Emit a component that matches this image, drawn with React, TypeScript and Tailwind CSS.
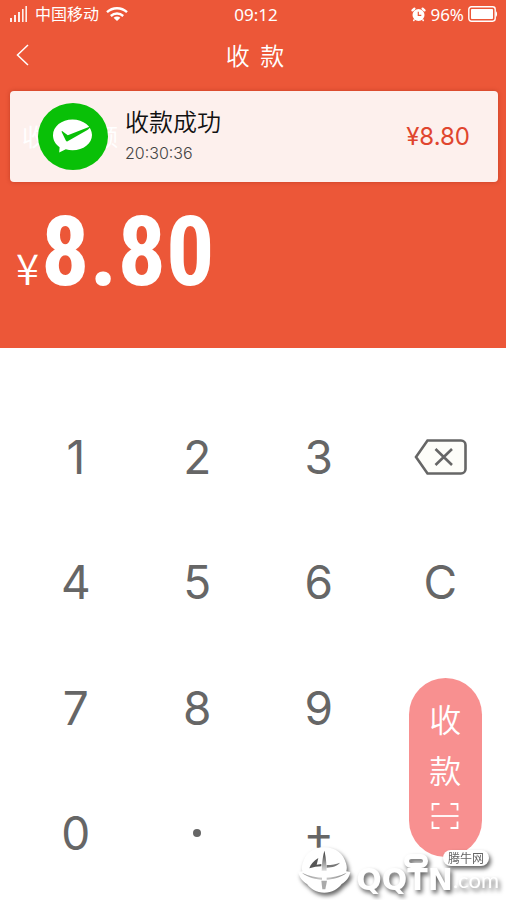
import type { ReactNode } from 'react'

function SignalIcon() {
  return (
    <svg className="h-4 w-[18px]" viewBox="0 0 18 16" fill="#fff" fillOpacity="0.9">
      <rect x="0" y="12" width="2" height="4" />
      <rect x="4" y="9" width="2" height="7" />
      <rect x="8" y="6" width="2" height="10" />
      <rect x="12" y="3" width="1.6" height="13" />
      <rect x="15.4" y="0" width="1.6" height="16" />
    </svg>
  )
}

function WifiIcon() {
  return (
    <svg className="h-[14px] w-[22px]" viewBox="0 0 22 14" fill="none" stroke="#fff" strokeWidth="2.4">
      <path d="M1 5.2C6.6 0 15.4 0 21 5.2" />
      <path d="M4.8 9c3.6-3.3 8.8-3.3 12.4 0" />
      <path d="M11 14l-3.4-3.2c2-1.7 4.8-1.7 6.8 0z" fill="#fff" stroke="none" />
    </svg>
  )
}

function AlarmIcon() {
  return (
    <svg className="h-[15px] w-[15px]" viewBox="0 0 15 15">
      <circle cx="7.5" cy="8" r="6" fill="#fff" />
      <path d="M1.5 3.4L3.4 1.6M13.5 3.4L11.6 1.6" stroke="#fff" strokeWidth="2.2" strokeLinecap="round" />
      <path d="M3.4 12.5l-1 1.5M11.6 12.5l1 1.5" stroke="#fff" strokeWidth="1.4" />
      <path d="M7.3 4.8v3.6h3" fill="none" stroke="#ec5738" strokeWidth="1.2" />
    </svg>
  )
}

function BatteryIcon() {
  return (
    <svg className="h-4 w-[30px]" viewBox="0 0 30 16">
      <rect x="0.8" y="0.8" width="26.4" height="14.4" rx="2.6" fill="none" stroke="#fff" strokeWidth="1.4" />
      <rect x="3" y="3" width="22" height="10" rx="0.8" fill="#fff" />
      <path d="M28 5.2c1.4.6 1.4 5 0 5.6z" fill="#fff" />
    </svg>
  )
}

function PayIcon() {
  return (
    <svg className="relative h-[67px] w-[70px] shrink-0" viewBox="0 0 70 67">
      <ellipse cx="35" cy="33.5" rx="35" ry="33.5" fill="#09c007" />
      <path
        d="M34.5 16.5c-11 0-19.5 7-19.5 15.8 0 4.9 2.5 9.1 6.6 12L21.2 49.5l6.6-3.2c2.1.6 4.4.9 6.7.9 11 0 19.5-6.7 19.5-15.2S45.5 16.5 34.5 16.5z"
        fill="#fff"
      />
      <path
        d="M24.4 28.2l5.4 4.1L54 22.8l-4.2 4-20.2 11.4c-.9.5-1.5.2-1.8-.6l-4-8.3c-.3-.9.1-1.5.6-1.1z"
        fill="#09c007"
      />
    </svg>
  )
}

function BackspaceIcon() {
  return (
    <svg className="h-9 w-[53px]" viewBox="0 0 53 36" stroke="#666" fill="none">
      <path d="M13.5 1.5H47a4.5 4.5 0 0 1 4.5 4.5v24a4.5 4.5 0 0 1-4.5 4.5H13.5L2 18z" fill="#fdfdf9" strokeWidth="2.6" />
      <path d="M21.5 10l16.5 16M38 10L21.5 26" strokeWidth="2.6" />
    </svg>
  )
}

function ScanIcon() {
  return (
    <svg className="mt-2 h-[26px] w-7" viewBox="0 0 28 26" fill="none" stroke="#fff" strokeWidth="1.8">
      <path d="M1.5 7.5V1h7M19.5 1h7v6.5M1.5 18.5V25h7M19.5 25h7v-6.5" />
      <path d="M.5 13h27" />
    </svg>
  )
}

function BullLogo() {
  return (
    <svg className="mr-[3px] h-12 w-[55px]" viewBox="0 0 165 144">
      <defs>
        <linearGradient id="slit" x1="0" y1="0" x2="0" y2="1">
          <stop offset="0" stopColor="#333" />
          <stop offset="1" stopColor="#ddd" />
        </linearGradient>
        <linearGradient id="lip" x1="0" y1="0" x2="1" y2="0">
          <stop offset="0" stopColor="#999" />
          <stop offset="0.5" stopColor="#ccc" />
          <stop offset="1" stopColor="#888" />
        </linearGradient>
      </defs>
      <path
        d="M79 4c34 0 58 20 65 48 3 10 3 16 1 24l12 2c-4 18-12 28-26 36-12 16-28 26-52 26s-40-10-52-26C13 106 5 96 1 78l12-2c-2-8-2-14 1-24C21 24 45 4 79 4z"
        fill="#fff"
      />
      <path d="M79 14c4 16 6 30 7 60H71c1-30 4-44 8-60z" fill="url(#slit)" />
      <path d="M61 36c-14 9-23 18-27 31 14-4 22-6 36-6v-7l-14 2c2-7 3-12 5-20z" fill="#555" />
      <path d="M126 50c-12 5-24 7-40 7v8c18-1 31-4 40-15z" fill="#777" />
      <path d="M12 80c40 20 94 20 134 0-32 28-102 28-134 0z" fill="url(#lip)" />
      <path d="M72 76h14v28H72z" fill="#fff" />
      <path d="M70 104h17l-5 26h-9z" fill="#aaa" />
    </svg>
  )
}

function Watermark() {
  return (
    <div className="pointer-events-none absolute right-[7px] bottom-[6px] flex items-end text-white drop-shadow-[2px_3px_2px_rgba(0,0,0,0.6)]">
      <BullLogo />
      <span className="font-['DejaVu_Sans',sans-serif] text-[30px] leading-7 font-bold">QQTN</span>
      <span className="font-['Lato',sans-serif] text-[22px] leading-7">.com</span>
      <span className="absolute top-2 left-[106px] h-[14px] w-6 rounded-full border-[5px] border-white" />
      <span className="absolute right-[10px] bottom-[28px] rounded-full bg-white px-[5px] font-['Noto_Sans_CJK_SC',sans-serif] text-[12px] leading-4 text-[#666]">
        腾牛网
      </span>
    </div>
  )
}

function Key({ label, children }: { label: string; children?: ReactNode }) {
  return (
    <button
      type="button"
      aria-label={label}
      className="flex items-center justify-center font-['Inter',sans-serif] text-[46px] leading-none text-[#666]"
    >
      {children ?? label}
    </button>
  )
}

export default function App() {
  return (
    <div className="relative flex min-h-screen flex-col bg-white font-['Noto_Sans','Noto_Sans_CJK_SC',sans-serif]">
      <header className="h-[348px] bg-[#ec5738] text-white">
        <div className="grid h-7 grid-cols-3 items-center pr-2 pl-[10px] text-[17px] leading-none">
          <div className="flex items-center gap-[7px]">
            <SignalIcon />
            <span className="text-[16px]">中国移动</span>
            <WifiIcon />
          </div>
          <span className="pl-1 text-center">09:12</span>
          <div className="flex items-center justify-end gap-1">
            <AlarmIcon />
            <span>96%</span>
            <BatteryIcon />
          </div>
        </div>

        <div className="grid h-[54px] grid-cols-3 items-center pr-3 pl-4">
          <button type="button" aria-label="返回" className="w-fit">
            <svg className="h-[22px] w-[13px]" viewBox="0 0 13 22" fill="none" stroke="#fff" strokeWidth="1.5">
              <path d="M12 1L1.5 11 12 21" />
            </svg>
          </button>
          <h1 className="text-center font-['Noto_Sans_CJK_SC',sans-serif] text-[24px] leading-none font-[350]">收&nbsp;&nbsp;款</h1>
        </div>

        <section className="relative mx-2 mt-[9px] ml-[10px] flex h-[91px] items-center rounded-[4px] bg-[#fdf0ed] pr-7 pl-7 shadow-[0_0_4px_rgba(140,30,10,0.4)]">
          <span className="absolute left-3 text-[24px] leading-none">收款金额</span>
          <PayIcon />
          <div className="ml-[17px] flex-1">
            <p className="font-['Noto_Sans_CJK_SC',sans-serif] text-[24px] leading-8 font-[350] text-[#111]">收款成功</p>
            <p className="font-['Inter',sans-serif] text-[16px] leading-8 font-light text-[#444]">20:30:36</p>
          </div>
          <span className="font-['Inter',sans-serif] text-[24px] text-[#e0452e]">¥8.80</span>
        </section>

        <p className="mt-[22px] flex items-end pl-4">
          <span className="pb-3 font-['Noto_Sans_CJK_SC',sans-serif] text-[42px] leading-none font-[350]">¥</span>
          <span className="ml-[2px] font-['Roboto_Condensed','Liberation_Sans',sans-serif] text-[96px] leading-none font-bold">8.80</span>
        </p>
      </header>

      <main className="grid flex-1 grid-cols-4 grid-rows-4 pt-[46px] pr-[5px] pb-1 pl-[15px]">
        <Key label="1" />
        <Key label="2" />
        <Key label="3" />
        <Key label="退格">
          <BackspaceIcon />
        </Key>
        <Key label="4" />
        <Key label="5" />
        <Key label="6" />
        <Key label="C" />
        <Key label="7" />
        <Key label="8" />
        <Key label="9" />
        <button
          type="button"
          className="row-span-2 mb-[6px] ml-[10px] flex h-[179px] w-[73px] flex-col items-center self-center justify-self-center rounded-full bg-[#f89090] pt-[15px] font-['Noto_Sans_CJK_SC',sans-serif] text-[32px] leading-[51px] font-[350] text-white"
        >
          <span>收</span>
          <span>款</span>
          <ScanIcon />
        </button>
        <Key label="0" />
        <Key label="点">
          <span className="h-2 w-2 rounded-full bg-[#666]" />
        </Key>
        <Key label="+" />
      </main>

      <Watermark />
    </div>
  )
}
